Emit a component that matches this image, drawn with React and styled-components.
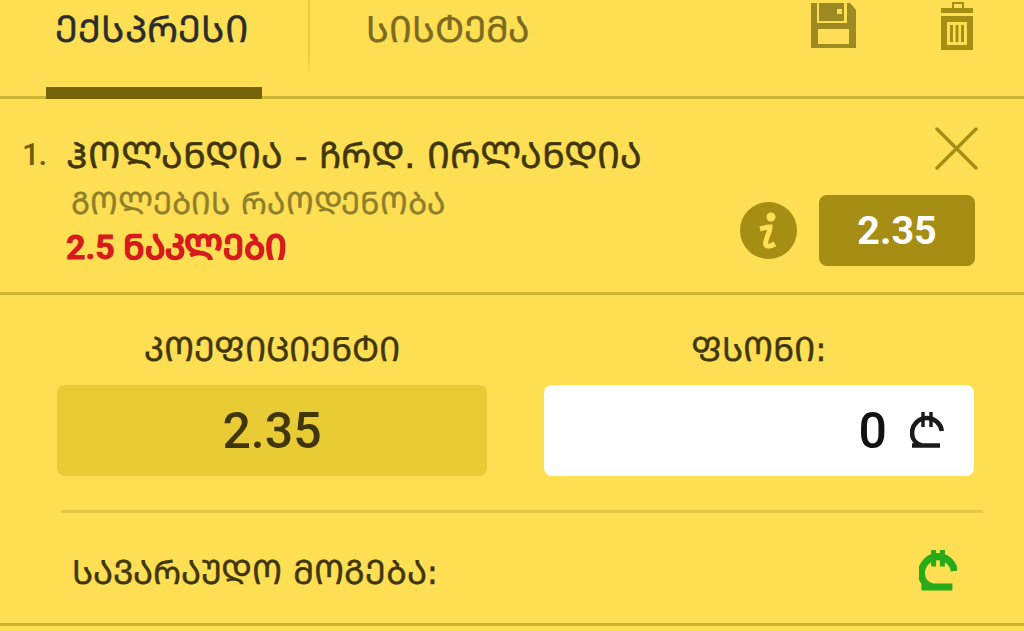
import React from 'react';
import styled, { createGlobalStyle } from 'styled-components';

const GlobalStyle = createGlobalStyle`
  html, body {
    margin: 0;
    padding: 0;
    background: #fede53;
    overflow: hidden;
  }
  * {
    box-sizing: border-box;
  }
`;

const FONT = `"DejaVu Sans", "Noto Sans", sans-serif`;
const NUM_FONT = `Roboto, "DejaVu Sans", sans-serif`;

// the app's font draws every georgian letter at one height, so use the Mtavruli capitals
const caps = (s) => s.replace(/[\u10D0-\u10FA]/g, (c) => String.fromCodePoint(c.codePointAt(0) + 0xbc0));

const Page = styled.div`
  width: 1024px;
  height: 631px;
  background: #fede53;
  font-family: ${FONT};
  overflow: hidden;
`;

const Header = styled.div`
  display: flex;
  align-items: flex-start;
  height: 99px;
  padding-left: 46px;
  border-bottom: 3px solid #cfb332;
`;

const Tab = styled.div`
  width: ${(p) => p.$width}px;
  height: 99px;
  padding: 10px ${(p) => (p.$active ? '5px' : '0')} 0 0;
  text-align: center;
  white-space: nowrap;
  font-size: ${(p) => (p.$active ? '37px' : '36px')};
  line-height: 40px;
  -webkit-text-stroke: 0.4px currentColor;
  color: ${(p) => (p.$active ? '#2b2c2d' : '#7b6a20')};
  border-bottom: ${(p) => (p.$active ? '12px solid #766409' : 'none')};
`;

const TabDivider = styled.div`
  width: 2px;
  height: 78px;
  margin-left: 46px;
  background: linear-gradient(#e6c93e, #e6c93e 70%, #fede53);
`;

const HeaderIcons = styled.div`
  display: flex;
  align-items: flex-start;
  gap: 85px;
  margin-left: auto;
  margin-right: 51px;
  padding-top: 2px;
`;

const Bet = styled.div`
  display: flex;
  height: 196px;
  padding: 28px 49px 0 22px;
  border-bottom: 3px solid #cfb332;
`;

const BetIndex = styled.div`
  width: 44px;
  padding-top: 10px;
  font-family: ${NUM_FONT};
  font-size: 31px;
  font-weight: 500;
  letter-spacing: -1px;
  line-height: 36px;
  color: #6f5e0c;
`;

const BetInfo = styled.div`
  flex: 1;
  padding-top: 9px;
  white-space: nowrap;
`;

const BetTitle = styled.div`
  font-size: 36.200px;
  line-height: 40px;
  -webkit-text-stroke: 0.5px currentColor;
  color: #40360a;
`;

const BetMarket = styled.div`
  padding-left: 5px;
  margin-top: 10px;
  font-size: 30.800px;
  line-height: 34px;
  -webkit-text-stroke: 0.4px currentColor;
  color: #8f7f2c;
`;

const BetPick = styled.div`
  margin-top: 10px;
  font-family: ${NUM_FONT};
  font-size: 34px;
  line-height: 34px;
  font-weight: 700;
  -webkit-text-stroke: 0.8px currentColor;
  color: #d71a1c;
`;

const BetSide = styled.div`
  display: flex;
  flex-direction: column;
  align-items: flex-end;
`;

const CloseButton = styled.div`
  display: flex;
  height: 68px;
  margin-right: -3px;
`;

const OddsRow = styled.div`
  display: flex;
  align-items: center;
  gap: 22px;
`;

const InfoBadge = styled.div`
  display: flex;
  width: 57px;
  height: 57px;
`;

const OddsBadge = styled.div`
  display: flex;
  align-items: center;
  justify-content: center;
  width: 156px;
  height: 71px;
  border-radius: 8px;
  background: #a68d13;
  color: #fff;
  font-family: ${NUM_FONT};
  font-weight: 700;
  font-size: 39.500px;
`;

const StakeGrid = styled.div`
  display: grid;
  grid-template-columns: 430px 430px;
  column-gap: 57px;
  padding: 35px 0 0 57px;
`;

const Field = styled.div`
  display: flex;
  flex-direction: column;
`;

const FieldLabel = styled.div`
  height: 55px;
  text-align: center;
  font-size: 33.500px;
  line-height: 40px;
  -webkit-text-stroke: 0.4px currentColor;
  color: #40360a;
`;

const FieldBox = styled.div`
  display: flex;
  align-items: center;
  justify-content: ${(p) => (p.$input ? 'flex-end' : 'center')};
  gap: 23px;
  height: 91px;
  padding-right: ${(p) => (p.$input ? '30px' : '0')};
  border-radius: 8px;
  background: ${(p) => (p.$input ? '#fff' : '#e8cb35')};
  color: ${(p) => (p.$input ? '#111' : '#40360a')};
  font-family: ${NUM_FONT};
  font-weight: 500;
  font-size: 50px;
`;

const Divider = styled.div`
  height: 3px;
  margin: 34px 41px 0 61px;
  background: #e3c745;
`;

const Payout = styled.div`
  display: flex;
  align-items: center;
  justify-content: space-between;
  height: 113px;
  padding: 6px 67px 0 72px;
  border-bottom: 3px solid #cfb332;
  font-size: 33.500px;
  -webkit-text-stroke: 0.4px currentColor;
  color: #40360a;
`;

const SaveIcon = () => (
  <svg width="45" height="47" viewBox="0 0 45 47">
    <path
      fill="#9e8a22"
      fillRule="evenodd"
      d="M0 1H39L45 8V46H0ZM6 1H8V19H33V1H36V21H6ZM26 7H31V12H26ZM7 27H38V42H7Z"
    />
  </svg>
);

const TrashIcon = () => (
  <svg width="32" height="48" viewBox="0 0 32 48">
    <path
      fill="#a68d13"
      fillRule="evenodd"
      d="M11 0H23V6H32V11H0V6H11ZM13 2V6H21V2ZM0 14H32V48H0ZM6 20V43H26V20ZM9 23H12V40H9ZM14.500 23H17.500V40H14.500ZM20 23H23V40H20Z"
    />
  </svg>
);

const CloseIcon = () => (
  <svg width="43" height="43" viewBox="0 0 43 43">
    <path stroke="#a68d13" strokeWidth="3.5" strokeLinecap="round" d="M2 2L41 41M41 2L2 41" />
  </svg>
);

const InfoIcon = () => (
  <svg width="57" height="57" viewBox="0 0 57 57">
    <circle cx="28.500" cy="28.500" r="28.500" fill="#a68d13" />
    <circle cx="31" cy="15" r="4.500" fill="#fede53" />
    <path
      fill="none"
      stroke="#fede53"
      strokeWidth="5"
      d="M20 27C24 26 27 25 30 25C30 30 26 36 25.500 41C25.500 45 30 45 35 42"
    />
  </svg>
);

const LariIcon = ({ color, weight, barWeight, width, height }) => (
  <svg width={width} height={height} viewBox="0 0 34 38" fill="none">
    <path
      stroke={color}
      strokeWidth={weight}
      d="M31.800 19A15 15 0 0 0 17 6A15 15 0 0 0 2 21C2 27 6 32 12 33.500M2 33.500H30"
    />
    <path stroke={color} strokeWidth={barWeight} d="M13 0V15M21 0V15" />
  </svg>
);

export default function App() {
  return (
    <Page>
      <GlobalStyle />
      <Header>
        <Tab $active $width={216}>{caps('ექსპრესი')}</Tab>
        <TabDivider />
        <Tab $width={276}>{caps('სისტემა')}</Tab>
        <HeaderIcons>
          <SaveIcon />
          <TrashIcon />
        </HeaderIcons>
      </Header>
      <Bet>
        <BetIndex>1.</BetIndex>
        <BetInfo>
          <BetTitle>{caps('ჰოლანდია - ჩრდ. ირლანდია')}</BetTitle>
          <BetMarket>{caps('გოლების რაოდენობა')}</BetMarket>
          <BetPick>{caps('2.5 ნაკლები')}</BetPick>
        </BetInfo>
        <BetSide>
          <CloseButton><CloseIcon /></CloseButton>
          <OddsRow>
            <InfoBadge><InfoIcon /></InfoBadge>
            <OddsBadge>2.35</OddsBadge>
          </OddsRow>
        </BetSide>
      </Bet>
      <StakeGrid>
        <Field>
          <FieldLabel>{caps('კოეფიციენტი')}</FieldLabel>
          <FieldBox>2.35</FieldBox>
        </Field>
        <Field>
          <FieldLabel>{caps('ფსონი:')}</FieldLabel>
          <FieldBox $input>0<LariIcon color="#1a1a1a" weight={4.6} barWeight={3.4} width={34} height={38} /></FieldBox>
        </Field>
      </StakeGrid>
      <Divider />
      <Payout>
        {caps('სავარაუდო მოგება:')}
        <LariIcon color="#27ab19" weight={6.5} barWeight={4.5} width={38} height={42} />
      </Payout>
    </Page>
  );
}
